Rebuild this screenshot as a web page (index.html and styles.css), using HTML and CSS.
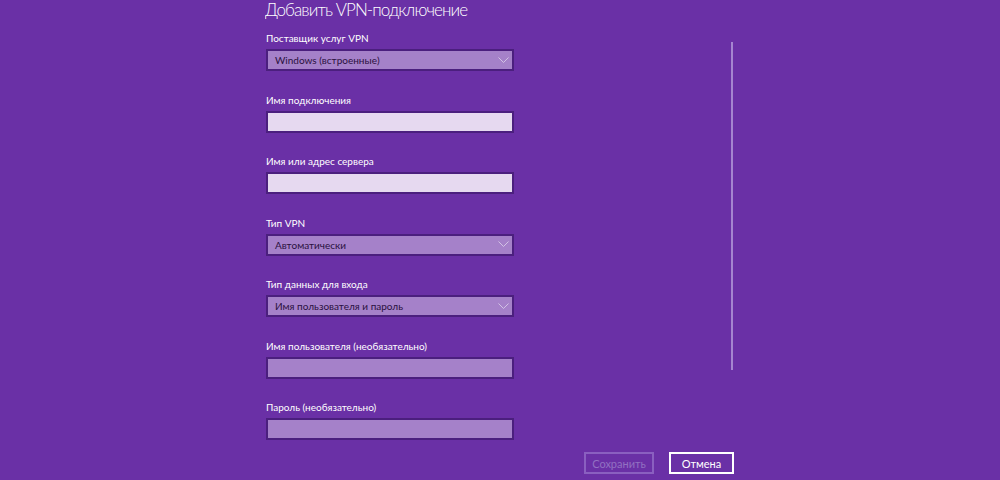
FILE: index.html
```html
<!DOCTYPE html>
<html lang="ru">
<head>
    <meta charset="UTF-8">
    <meta name="viewport" content="width=device-width, initial-scale=1.0">
    <title>Добавить VPN-подключение</title>
    <link rel="stylesheet" href="styles.css">
</head>
<body>
    <div class="panel">
        <div class="content">
            <div class="form">
                <h1 class="title">Добавить VPN-подключение</h1>

                <div class="field">
                    <div class="field-label">Поставщик услуг VPN</div>
                    <div class="select">
                        <span>Windows (встроенные)</span>
                        <svg class="chevron" width="11" height="7" viewBox="0 0 11 7"><polyline points="0.5,0.5 5.5,5.5 10.5,0.5" fill="none" stroke="currentColor" stroke-width="1"/></svg>
                    </div>
                </div>

                <div class="field">
                    <div class="field-label">Имя подключения</div>
                    <div class="input light"></div>
                </div>

                <div class="field">
                    <div class="field-label">Имя или адрес сервера</div>
                    <div class="input light"></div>
                </div>

                <div class="field">
                    <div class="field-label">Тип VPN</div>
                    <div class="select">
                        <span>Автоматически</span>
                        <svg class="chevron" width="11" height="7" viewBox="0 0 11 7"><polyline points="0.5,0.5 5.5,5.5 10.5,0.5" fill="none" stroke="currentColor" stroke-width="1"/></svg>
                    </div>
                </div>

                <div class="field">
                    <div class="field-label">Тип данных для входа</div>
                    <div class="select">
                        <span>Имя пользователя и пароль</span>
                        <svg class="chevron" width="11" height="7" viewBox="0 0 11 7"><polyline points="0.5,0.5 5.5,5.5 10.5,0.5" fill="none" stroke="currentColor" stroke-width="1"/></svg>
                    </div>
                </div>

                <div class="field">
                    <div class="field-label">Имя пользователя (необязательно)</div>
                    <div class="input"></div>
                </div>

                <div class="field">
                    <div class="field-label">Пароль (необязательно)</div>
                    <div class="input"></div>
                </div>
            </div>

            <div class="scrollbar"></div>
        </div>

        <div class="footer">
            <button class="btn disabled">Сохранить</button>
            <button class="btn">Отмена</button>
        </div>
    </div>
</body>
</html>
```

FILE: styles.css
```css
body {
    margin: 0;
    background-color: #6a30a6;
    font-family: Lato, "Noto Sans", sans-serif;
    color: #ffffff;
    overflow: hidden;
}

.panel {
    margin-left: 265px;
    width: 469px;
    height: 480px;
    display: flex;
    flex-direction: column;
}

.content {
    flex: 1;
    display: flex;
    justify-content: space-between;
    overflow: hidden;
}

.form {
    width: 249px;
}

.title {
    margin: -4px 0 0 0;
    font-size: 17px;
    font-weight: 300;
    line-height: 28px;
    height: 34px;
    letter-spacing: -0.9px;
    white-space: nowrap;
}

.field {
    margin-bottom: 20.5px;
    padding-left: 1px;
}

.field-label {
    font-size: 10px;
    line-height: 16px;
    margin-bottom: 3px;
}

.select,
.input {
    box-sizing: border-box;
    width: 248px;
    height: 22px;
    border: 2px solid #4b1f7e;
    background-color: #a581c9;
}

.select {
    display: flex;
    align-items: center;
    justify-content: space-between;
    padding: 0 3px 0 7px;
    font-size: 10px;
    color: #2a1040;
}

.chevron {
    color: #d2c2e4;
}

.input.light {
    background-color: #e6d9f0;
}

.scrollbar {
    width: 2px;
    margin-top: 42px;
    height: 328px;
    margin-right: 1px;
    background-color: #a585d0;
}

.footer {
    display: flex;
    justify-content: flex-end;
    gap: 15px;
    padding-bottom: 6px;
}

.btn {
    box-sizing: border-box;
    width: 65px;
    height: 22px;
    padding: 0;
    border: 2px solid #ffffff;
    background-color: transparent;
    color: #ffffff;
    font-family: Lato, "Noto Sans", sans-serif;
    font-size: 11px;
}

.btn.disabled {
    width: 70px;
    border-color: #8a5fc0;
    color: #9270c2;
}
```
